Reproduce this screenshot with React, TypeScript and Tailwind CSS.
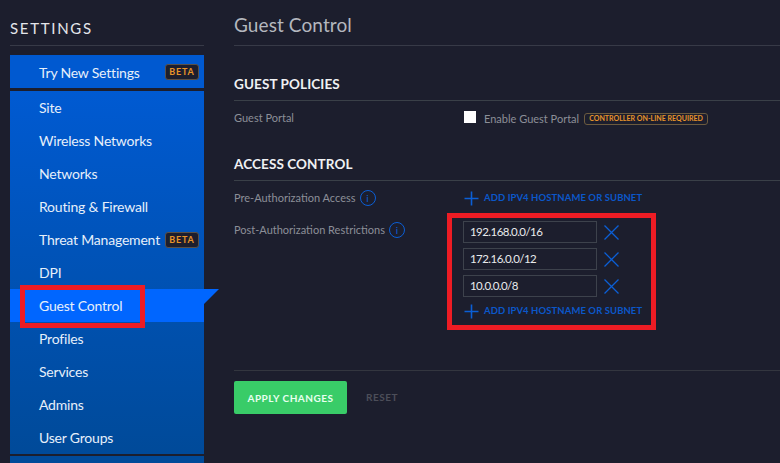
const rows = ["Site","Wireless Networks","Networks","Routing & Firewall","Threat Management","DPI","Guest Control","Profiles","Services","Admins","User Groups"];

function Beta() {
  return <span className="flex h-[16px] w-[34px] items-center justify-center rounded-[3px] border border-[#5a5046] bg-[#1c1e2d] text-[9px] font-bold tracking-[0.8px] text-[#e8942a]">BETA</span>;
}
function Plus() {
  return <svg width="15" height="15" viewBox="0 0 15 15" className="ml-[1px] shrink-0" stroke="#0b5fd6" strokeWidth="1.6"><path d="M7.5 0.5V14.5M0.5 7.5H14.5" /></svg>;
}
function Cross() {
  return <svg width="15" height="15" viewBox="0 0 15 15" className="shrink-0" stroke="#0b5fd6" strokeWidth="1.3"><path d="M0.5 0.5L14.5 14.5M14.5 0.5L0.5 14.5" /></svg>;
}
function Info() {
  return <span className="flex h-[16px] w-[16px] shrink-0 items-center justify-center rounded-full border border-[#0b5fd6] text-[10px] leading-none text-[#0b5fd6]">i</span>;
}
function Add({ className = "" }: { className?: string }) {
  return (
    <div className={`flex h-[16px] items-center gap-[5px] text-[9.5px] font-bold tracking-[0.08px] text-[#0b57c9] ${className}`}>
      <Plus />
      <span className="mt-[1px]">ADD IPV4 HOSTNAME OR SUBNET</span>
    </div>
  );
}
function Ip({ v }: { v: string }) {
  return (
    <div className="flex items-center gap-[7px]">
      <div className="flex h-[22px] w-[134px] items-center border border-[#3d424c] pl-[6px] text-[11.5px] tracking-[-0.55px] text-[#e8eaec]">{v}</div>
      <Cross />
    </div>
  );
}

export default function App() {
  return (
    <div className="relative flex h-[463px] w-[780px] overflow-hidden bg-[#1c1e2d] font-['Lato',sans-serif]">
      <aside className="ml-[10px] w-[194px] shrink-0">
        <div className="flex h-[46px] items-end border-b-[1px] border-[#373a47] pb-[8px] text-[15px] leading-[18px] tracking-[1.7px] text-[#e4e6ea]">SETTINGS</div>
        <div className="mt-[9px] flex h-[33px] items-center justify-between bg-[#0059d0] pl-[29px] pr-[5px] text-[14px] tracking-[-0.2px] text-[#e6effa]">
          <span className="mt-[1px]">Try New Settings</span>
          <Beta />
        </div>
        <div className="mt-[3px] h-[363px] bg-gradient-to-b from-[#005ad2] to-[#004a99]">
          {rows.map((r) => (
            <div key={r} className={`relative flex h-[33px] items-center justify-between pl-[29px] pr-[5px] text-[14px] tracking-[-0.2px] text-[#e6effa] ${r === "Guest Control" ? "bg-[#0066ff]" : ""}`}>
              <span>{r}</span>
              {r === "Threat Management" && <Beta />}
              {r === "Guest Control" && (
                <svg width="15" height="15" viewBox="0 0 15 15" className="absolute left-full top-0"><path d="M0 0H15L0 15Z" fill="#0066ff" /></svg>
              )}
            </div>
          ))}
        </div>
        <div className="mt-[2px] h-[10px] bg-[#004a99]" />
      </aside>

      <main className="ml-[30px] flex-1">
        <h1 className="flex h-[46px] items-end border-b border-[#373a47] pb-[8px] text-[19px] font-normal leading-[24px] tracking-[0.1px] text-[#b4b7be]">Guest Control</h1>

        <h2 className="mt-[30px] border-b border-[#3a4048] pb-[8px] text-[13.5px] font-bold leading-[16px] tracking-[0.1px] text-[#f0f1f3]">GUEST POLICIES</h2>
        <div className="mt-[9px] flex h-[16px] items-center text-[11px] text-[#8c8f98]">
          <span className="w-[230px]">Guest Portal</span>
          <span className="mb-[3px] h-[12px] w-[12px] bg-white" />
          <span className="ml-[8px] mt-[2px]">Enable Guest Portal</span>
          <span className="ml-[5px] mt-[2px] flex h-[12px] items-center rounded-[3px] border border-[#6b5a3e] px-[4px] text-[7.05px] font-bold text-[#e8942a]">CONTROLLER ON-LINE REQUIRED</span>
        </div>

        <h2 className="mt-[30px] border-b border-[#3a4048] pb-[8px] text-[13.5px] font-bold leading-[16px] tracking-[0.1px] text-[#f0f1f3]">ACCESS CONTROL</h2>
        <div className="mt-[9px] flex h-[16px] items-center text-[11px] text-[#8c8f98]">
          <div className="flex w-[229px] items-center gap-[4px]"><span>Pre-Authorization Access</span><Info /></div>
          <Add />
        </div>
        <div className="mt-[15px] flex text-[11px] text-[#8c8f98]">
          <div className="mt-[1px] flex h-[16px] w-[229px] items-center gap-[4px]"><span>Post-Authorization Restrictions</span><Info /></div>
          <div className="flex flex-col gap-[5px]">
            <Ip v="192.168.0.0/16" />
            <Ip v="172.16.0.0/12" />
            <Ip v="10.0.0.0/8" />
            <Add className="mt-[1px]" />
          </div>
        </div>

        <div className="mt-[51px] h-px bg-[#33363f]" />
        <div className="mt-[10px] flex items-center">
          <button className="h-[33px] w-[113px] rounded-[2px] bg-[#39cc68] pt-[1px] text-[10px] font-bold tracking-[0.5px] text-[#e8fff0]">APPLY CHANGES</button>
          <span className="ml-[19px] text-[10px] font-bold tracking-[0.5px] text-[#4c4e59]">RESET</span>
        </div>
      </main>

      <div className="pointer-events-none absolute left-[20px] top-[285px] h-[43px] w-[125px] border-[5px] border-[#ed1c24]" />
      <div className="pointer-events-none absolute left-[447px] top-[213px] h-[117px] w-[209px] border-[5px] border-[#ed1c24]" />
    </div>
  );
}
